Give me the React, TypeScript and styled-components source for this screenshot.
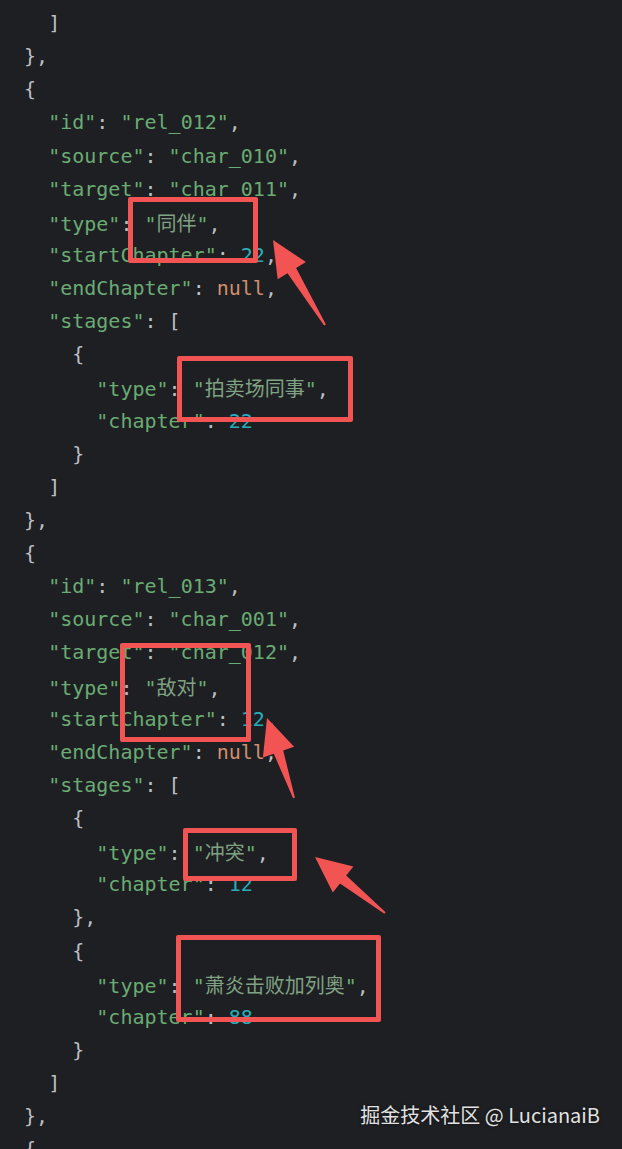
import React from "react";
import styled, { createGlobalStyle } from "styled-components";

const GlobalStyle = createGlobalStyle`
  html, body {
    margin: 0;
    padding: 0;
    background: #1e1f22;
    overflow: hidden;
  }
  #root {
    width: 622px;
    height: 1149px;
  }
`;

const Screen = styled.div`
  position: relative;
  width: 622px;
  height: 1149px;
  overflow: hidden;
  background: #1e1f22;
`;

const Code = styled.div`
  display: flex;
  flex-direction: column;
  padding: 7px 0 0 0;
  font-family: "DejaVu Sans Mono", "Liberation Mono", monospace;
  font-size: 20px;
  line-height: 33.13px;
  color: #bcbec4;
  white-space: pre;
`;

const Line = styled.div<{ $indent: number }>`
  height: 33.13px;
  padding-left: ${(p) => p.$indent * 2}ch;
`;

const Key = styled.span`
  color: #6aab73;
`;
const Str = styled.span`
  color: #6aab73;
`;
const Cjk = styled.span`
  font-family: "Noto Sans CJK SC", sans-serif;
  color: #7fa282;
`;
const Num = styled.span`
  color: #2aacb8;
`;
const Null = styled.span`
  color: #cf8e6d;
`;
const Punct = styled.span`
  color: #bcbec4;
`;

const Box = styled.div<{ $x: number; $y: number; $w: number; $h: number }>`
  position: absolute;
  left: ${(p) => p.$x}px;
  top: ${(p) => p.$y}px;
  width: ${(p) => p.$w}px;
  height: ${(p) => p.$h}px;
  box-sizing: border-box;
  border: 5px solid #f25454;
  border-radius: 2px;
  pointer-events: none;
`;

const ArrowLayer = styled.svg`
  position: absolute;
  left: 0;
  top: 0;
  width: 622px;
  height: 1149px;
  pointer-events: none;
`;

const Watermark = styled.div`
  position: absolute;
  right: 22px;
  bottom: 21px;
  font-family: "Noto Sans CJK SC", "Noto Sans", sans-serif;
  font-size: 20px;
  line-height: 26px;
  color: #e2e2e2;
  text-shadow: 0 0 3px rgba(0, 0, 0, 0.5);
  white-space: pre;
`;

type Tok = { t: "k" | "s" | "c" | "n" | "nl" | "p"; v: string };
type L = { indent: number; toks: Tok[] };

const p = (v: string): Tok => ({ t: "p", v });

const kvStr = (indent: number, key: string, val: string, comma = true): L => ({
  indent,
  toks: [
    { t: "k", v: `"${key}"` },
    p(": "),
    { t: "s", v: `"${val}"` },
    ...(comma ? [p(",")] : []),
  ],
});

const kvCjk = (indent: number, key: string, val: string, comma = true): L => ({
  indent,
  toks: [
    { t: "k", v: `"${key}"` },
    p(": "),
    { t: "s", v: '"' },
    { t: "c", v: val },
    { t: "s", v: '"' },
    ...(comma ? [p(",")] : []),
  ],
});

const kvNum = (indent: number, key: string, val: string, comma = true): L => ({
  indent,
  toks: [{ t: "k", v: `"${key}"` }, p(": "), { t: "n", v: val }, ...(comma ? [p(",")] : [])],
});

const kvNull = (indent: number, key: string): L => ({
  indent,
  toks: [{ t: "k", v: `"${key}"` }, p(": "), { t: "nl", v: "null" }, p(",")],
});

const kvOpen = (indent: number, key: string): L => ({
  indent,
  toks: [{ t: "k", v: `"${key}"` }, p(": "), p("[")],
});

const pl = (indent: number, v: string): L => ({ indent, toks: [p(v)] });

const lines: L[] = [
  pl(2, "]"),
  pl(1, "},"),
  pl(1, "{"),
  kvStr(2, "id", "rel_012"),
  kvStr(2, "source", "char_010"),
  kvStr(2, "target", "char_011"),
  kvCjk(2, "type", "同伴"),
  kvNum(2, "startChapter", "22"),
  kvNull(2, "endChapter"),
  kvOpen(2, "stages"),
  pl(3, "{"),
  kvCjk(4, "type", "拍卖场同事"),
  kvNum(4, "chapter", "22", false),
  pl(3, "}"),
  pl(2, "]"),
  pl(1, "},"),
  pl(1, "{"),
  kvStr(2, "id", "rel_013"),
  kvStr(2, "source", "char_001"),
  kvStr(2, "target", "char_012"),
  kvCjk(2, "type", "敌对"),
  kvNum(2, "startChapter", "12"),
  kvNull(2, "endChapter"),
  kvOpen(2, "stages"),
  pl(3, "{"),
  kvCjk(4, "type", "冲突"),
  kvNum(4, "chapter", "12", false),
  pl(3, "},"),
  pl(3, "{"),
  kvCjk(4, "type", "萧炎击败加列奥"),
  kvNum(4, "chapter", "88", false),
  pl(3, "}"),
  pl(2, "]"),
  pl(1, "},"),
  pl(1, "{"),
];

const renderTok = (tok: Tok, i: number) => {
  switch (tok.t) {
    case "k":
      return <Key key={i}>{tok.v}</Key>;
    case "s":
      return <Str key={i}>{tok.v}</Str>;
    case "c":
      return <Cjk key={i}>{tok.v}</Cjk>;
    case "n":
      return <Num key={i}>{tok.v}</Num>;
    case "nl":
      return <Null key={i}>{tok.v}</Null>;
    default:
      return <Punct key={i}>{tok.v}</Punct>;
  }
};

const boxes = [
  { x: 128, y: 197, w: 130, h: 66 },
  { x: 177, y: 356, w: 176, h: 66 },
  { x: 120, y: 643, w: 131, h: 99 },
  { x: 183, y: 828, w: 114, h: 53 },
  { x: 176, y: 935, w: 205, h: 87 },
];

type Pt = [number, number];
const arrowPoints = (tip: Pt, tail: Pt) => {
  const dx = tail[0] - tip[0];
  const dy = tail[1] - tip[1];
  const len = Math.hypot(dx, dy);
  const ux = dx / len;
  const uy = dy / len;
  const px = uy;
  const py = -ux;
  const headLen = 36;
  const headHalf = 16.5;
  const shaftHalf = 5;
  const bx = tip[0] + ux * headLen;
  const by = tip[1] + uy * headLen;
  const pts: Pt[] = [
    tip,
    [bx + px * headHalf, by + py * headHalf],
    [bx + px * shaftHalf, by + py * shaftHalf],
    [tail[0] + px * 1, tail[1] + py * 1],
    [tail[0] - px * 1, tail[1] - py * 1],
    [bx - px * shaftHalf, by - py * shaftHalf],
    [bx - px * headHalf, by - py * headHalf],
  ];
  return pts.map((q) => `${q[0].toFixed(1)},${q[1].toFixed(1)}`).join(" ");
};

const arrows: { tip: Pt; tail: Pt }[] = [
  { tip: [273, 240], tail: [325, 325] },
  { tip: [267, 718], tail: [294, 798] },
  { tip: [315, 857], tail: [385, 913] },
];

export default function App() {
  return (
    <>
      <GlobalStyle />
      <Screen>
        <Code>
          {lines.map((l, i) => (
            <Line key={i} $indent={l.indent}>
              {l.toks.map(renderTok)}
            </Line>
          ))}
        </Code>
        {boxes.map((b, i) => (
          <Box key={i} $x={b.x} $y={b.y} $w={b.w} $h={b.h} />
        ))}
        <ArrowLayer viewBox="0 0 622 1149">
          {arrows.map((a, i) => (
            <polygon key={i} points={arrowPoints(a.tip, a.tail)} fill="#f25454" strokeLinejoin="round" />
          ))}
        </ArrowLayer>
        <Watermark>掘金技术社区 @ LucianaiB</Watermark>
      </Screen>
    </>
  );
}
